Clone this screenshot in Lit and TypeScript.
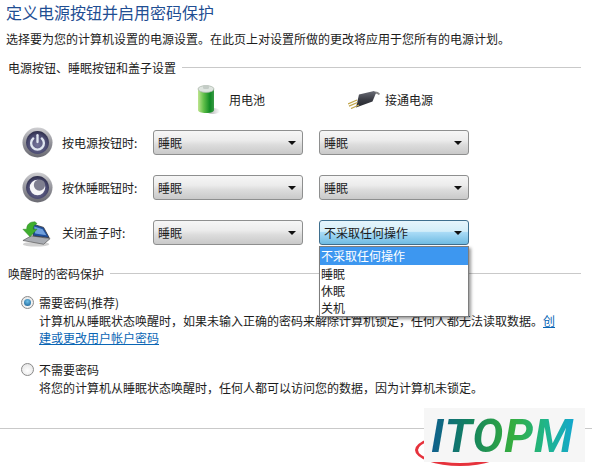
import { LitElement, html, css, svg } from "lit";
import { customElement } from "lit/decorators.js";

const powerDisc = (id: string, inner: unknown) => html`<svg class="disc" viewBox="0 0 32 32" width="31" height="31">
  <defs>
    <linearGradient id="${id}r" x1="0" y1="0" x2="0" y2="1"><stop offset="0" stop-color="#cfcfd2"/><stop offset=".55" stop-color="#8f8f96"/><stop offset="1" stop-color="#6a6a72"/></linearGradient>
    <radialGradient id="${id}c" cx="0.5" cy="0.6" r="0.6"><stop offset="0" stop-color="#74749a"/><stop offset=".7" stop-color="#4a4a70"/><stop offset="1" stop-color="#2c2c48"/></radialGradient>
  </defs>
  <circle cx="16" cy="16" r="15.5" fill="url(#${id}r)"/>
  <circle cx="16" cy="16" r="11.8" fill="url(#${id}c)"/>
  ${inner}
</svg>`;

const powerGlyph = svg`<path d="M11.600 11.800a6.600 6.600 0 1 0 8.800 0" fill="none" stroke="#dfe6f0" stroke-width="2.400" stroke-linecap="round"/><path d="M16 8.500v7" stroke="#dfe6f0" stroke-width="2.400" stroke-linecap="round"/>`;
const moonGlyph = svg`<circle cx="16" cy="16" r="8" fill="#f6f6f8"/><circle cx="18" cy="13.500" r="5.800" fill="#7f7f90"/>`;

@customElement("app-root")
export class AppRoot extends LitElement {
  static styles = css`
    :host {
      display: block; position: relative; width: 592px; height: 468px; overflow: hidden;
      background: #fff; color: #1c1c1c;
      font-family: "Microsoft YaHei", "Noto Sans CJK SC", "Liberation Sans", sans-serif; font-size: 12px; line-height: 17px;
    }
    .page { display: flex; flex-direction: column; padding: 2px 0 0 6px; }
    h1 { margin: 0; font-size: 16px; line-height: 20px; font-weight: 400; color: #1f4e93; }
    .intro { margin: 8px 0 0; }
    .legend { display: flex; align-items: center; gap: 6px; margin: 12px 11px 0 2px; white-space: nowrap; }
    .legend::after { content: ""; flex: 1; height: 1px; background: #c9c9c9; }
    .cols { display: grid; grid-template-columns: 191px 188px auto; margin-top: 8px; height: 31px; align-items: center; }
    .col { display: flex; align-items: center; gap: 9px; }
    .col.plug { gap: 5px; margin-left: -37px; }
    .rows { display: flex; flex-direction: column; gap: 20px; margin-top: 15px; }
    .row { display: grid; grid-template-columns: 16px 30px 10px 91px 150px 16px 150px; align-items: center; height: 25px; }
    .ico { grid-column: 2; display: flex; align-items: center; justify-content: center; height: 25px; }
    .disc { flex: none; }
    .lbl { grid-column: 4; }
    .sel {
      box-sizing: border-box; height: 25px; display: flex; align-items: center; justify-content: space-between; padding: 0 6px 0 4px;
      border: 1px solid #8e8f8f; border-radius: 3px;
      background: linear-gradient(#f6f6f6 0, #ececec 40%, #dcdcdc 60%, #c9c9c9 100%);
    }
    .sel i { width: 0; height: 0; border: 4px solid transparent; border-top: 4px solid #111; border-bottom: 0; }
    .sel.open {
      border-color: #3f6f8e;
      background: linear-gradient(#e6f5fc 0, #d3eef9 45%, #a9dbf6 50%, #6fbbe2 100%);
    }
    .legend.second { margin-top: 20px; }
    .opt { display: grid; grid-template-columns: 14px 1fr; column-gap: 4px; margin: 0 27px 0 15px; }
    .opt.a { margin-top: 12px; }
    .opt.b { margin-top: 15px; }
    .opt p { grid-column: 2; margin: 1px 0 0; }
    .opt .h { line-height: 17px; }
    .radio { align-self: center; box-sizing: border-box; width: 13px; height: 13px; border-radius: 50%; border: 1px solid #8a8a8a;
      background: radial-gradient(circle at 50% 60%, #fff 0, #e0e0e0 100%); display: flex; align-items: center; justify-content: center; }
    .radio.on::before { content: ""; width: 7px; height: 7px; border-radius: 50%; background: radial-gradient(circle at 50% 35%, #6fc0e8, #13598f); }
    a { color: #0a66b5; text-decoration: underline; }
    .rule { height: 1px; background: #c9c9c9; position: absolute; left: 0; right: 0; top: 428px; }
    .menu {
      position: absolute; left: 319px; top: 246px; width: 150px; box-sizing: border-box; border: 1px solid #7d7d7d; background: #fff;
      box-shadow: 2px 2px 3px rgba(0,0,0,.4);
    }
    .menu div { height: 17px; line-height: 17px; padding-left: 1px; }
    .menu .hl { background: #3d97f0; color: #fff; height: 18px; line-height: 18px; }
    .oval { position: absolute; left: 415px; top: 434px; width: 90px; height: 32px; box-sizing: border-box; border: 3px solid #e6323c; border-radius: 50%; }
    .mark {
      position: absolute; left: 424px; top: 408px; width: 161px; height: 54px; box-sizing: border-box; background: #f6f6f6;
      display: flex; align-items: center; justify-content: center; padding-top: 1px;
      font-family: "Roboto", "Liberation Sans", sans-serif; font-weight: 700; font-style: italic; font-size: 46px; line-height: 54px; letter-spacing: 1px;
    }
    .mark span { background: linear-gradient(90deg, #0f5f8f 0, #128060 25%, #35ad3f 55%, #1fb58a 78%, #12a5d8 100%); -webkit-background-clip: text; background-clip: text; color: transparent; padding-right: 4px; }
  `;

  private sel(t: string, open = false) {
    return html`<div class="sel ${open ? "open" : ""}"><span>${t}</span><i></i></div>`;
  }

  render() {
    return html`
      <div class="page">
        <h1>定义电源按钮并启用密码保护</h1>
        <p class="intro">选择要为您的计算机设置的电源设置。在此页上对设置所做的更改将应用于您所有的电源计划。</p>
        <div class="legend">电源按钮、睡眠按钮和盖子设置</div>
        <div class="cols">
          <span></span>
          <div class="col">
            <svg width="23" height="31" viewBox="0 0 23 31">
              <defs>
                <linearGradient id="bat" x1="0" x2="1" y1="0" y2="0"><stop offset="0" stop-color="#bfe58f"/><stop offset=".35" stop-color="#62c04a"/><stop offset=".75" stop-color="#0f8a24"/><stop offset="1" stop-color="#3a9a45"/></linearGradient>
                <linearGradient id="batS" x1="0" x2="1" y1="0" y2="0"><stop offset="0" stop-color="#999"/><stop offset="1" stop-color="#fff"/></linearGradient>
              </defs>
              <ellipse cx="16" cy="27" rx="7" ry="3" fill="url(#batS)"/>
              <path d="M1 5v21c0 2 3 3 8 3s8-1 8-3V5z" fill="url(#bat)"/>
              <ellipse cx="9" cy="5" rx="8" ry="3.400" fill="#dfe5e0" stroke="#a8b5a8" stroke-width=".7"/>
              <rect x="6" y="1" width="6" height="4" rx="1.500" fill="#c4ccc6"/>
            </svg>
            <span>用电池</span>
          </div>
          <div class="col plug">
            <svg width="32" height="18" viewBox="0 0 32 18">
              <defs><linearGradient id="pb" x1="0" y1="0" x2="0" y2="1"><stop offset="0" stop-color="#6a6c76"/><stop offset=".5" stop-color="#3c3e46"/><stop offset="1" stop-color="#24262c"/></linearGradient></defs>
              <path d="M25 2c2.500-1 4.500-.8 6.500 1.500" fill="none" stroke="#888" stroke-width="1.800"/>
              <path d="M11 3.500L26 0l2 2-3.500 8.500L8 16.500z" fill="url(#pb)"/>
              <path d="M9 9L0 13M9.500 11.500L1 15.200M11 14L3 17.500" stroke="#c2a64c" stroke-width="1.300"/>
            </svg>
            <span>接通电源</span>
          </div>
        </div>
        <div class="rows">
          <div class="row">
            <div class="ico">${powerDisc("p", powerGlyph)}</div>
            <div class="lbl">按电源按钮时:</div>
            ${this.sel("睡眠")}<span></span>${this.sel("睡眠")}
          </div>
          <div class="row">
            <div class="ico">${powerDisc("m", moonGlyph)}</div>
            <div class="lbl">按休睡眠钮时:</div>
            ${this.sel("睡眠")}<span></span>${this.sel("睡眠")}
          </div>
          <div class="row">
            <div class="ico">
              <svg width="32" height="30" viewBox="0 0 32 30">
                <ellipse cx="15" cy="27" rx="14" ry="2.500" fill="#d0d0d0"/>
                <path d="M1 23l9-5 20 3-7 6z" fill="#a9acb2" stroke="#555" stroke-width=".7"/>
                <path d="M12 18L10 5l13 4 6 11z" fill="#1f4f9c" stroke="#2a2a30" stroke-width=".8"/>
                <path d="M14 15.500L13 8l9 3 4 6.500z" fill="#6f9fdc"/>
                <path d="M14 3C8 3 5 6 5 11H1l7.500 8L16 11h-4c0-3 1-5 4-6z" fill="#3fae2e" stroke="#24801c" stroke-width=".5"/>
              </svg>
            </div>
            <div class="lbl">关闭盖子时:</div>
            ${this.sel("睡眠")}<span></span>${this.sel("不采取任何操作", true)}
          </div>
        </div>
        <div class="legend second">唤醒时的密码保护</div>
        <div class="opt a">
          <span class="radio on"></span><span class="h">需要密码(推荐)</span>
          <p>计算机从睡眠状态唤醒时，如果未输入正确的密码来解除计算机锁定，任何人都无法读取数据。<a>创建或更改用户帐户密码</a></p>
        </div>
        <div class="opt b">
          <span class="radio"></span><span class="h">不需要密码</span>
          <p>将您的计算机从睡眠状态唤醒时，任何人都可以访问您的数据，因为计算机未锁定。</p>
        </div>
      </div>
      <div class="rule"></div>
      <div class="menu">
        <div class="hl">不采取任何操作</div><div>睡眠</div><div>休眠</div><div>关机</div>
      </div>
      <div class="oval"></div>
      <div class="mark"><span>ITOPM</span></div>
    `;
  }
}
